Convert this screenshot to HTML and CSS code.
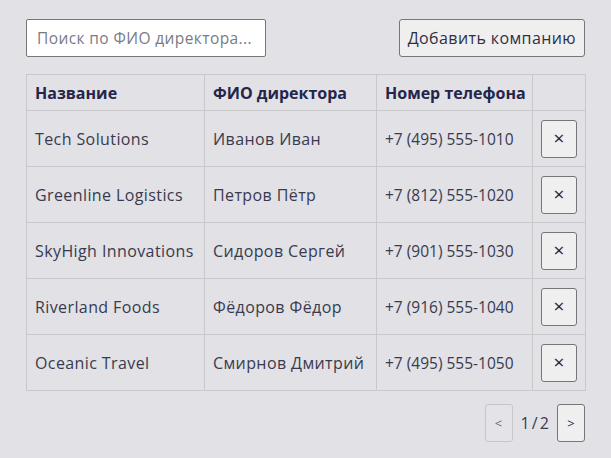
FILE: index.html
```html
<!DOCTYPE html>
<html lang="ru">
<head>
<meta charset="utf-8">
<link rel="stylesheet" href="styles.css">
</head>
<body>
<div class="page">
  <div class="toolbar">
    <input class="search" type="text" placeholder="Поиск по ФИО директора...">
    <button class="btn add">Добавить компанию</button>
  </div>
  <table class="companies">
    <colgroup>
      <col class="c-name"><col class="c-dir"><col class="c-phone"><col class="c-act">
    </colgroup>
    <thead>
      <tr><th>Название</th><th>ФИО директора</th><th>Номер телефона</th><th></th></tr>
    </thead>
    <tbody>
      <tr><td>Tech Solutions</td><td>Иванов Иван</td><td class="phone">+7 (495) 555-1010</td><td class="act"><button class="btn del">×</button></td></tr>
      <tr><td>Greenline Logistics</td><td>Петров Пётр</td><td class="phone">+7 (812) 555-1020</td><td class="act"><button class="btn del">×</button></td></tr>
      <tr><td>SkyHigh Innovations</td><td>Сидоров Сергей</td><td class="phone">+7 (901) 555-1030</td><td class="act"><button class="btn del">×</button></td></tr>
      <tr><td>Riverland Foods</td><td>Фёдоров Фёдор</td><td class="phone">+7 (916) 555-1040</td><td class="act"><button class="btn del">×</button></td></tr>
      <tr><td>Oceanic Travel</td><td>Смирнов Дмитрий</td><td class="phone">+7 (495) 555-1050</td><td class="act"><button class="btn del">×</button></td></tr>
    </tbody>
  </table>
  <div class="pager">
    <button class="btn page-btn" disabled>&lt;</button>
    <span class="page-info">1 / 2</span>
    <button class="btn page-btn">&gt;</button>
  </div>
</div>
</body>
</html>
```
FILE: styles.css
```css
html, body {
  margin: 0;
  padding: 0;
  background: #e1e1e6;
}
body {
  font-family: "Open Sans", "Noto Sans", sans-serif;
  color: #3a3a4e;
  font-size: 16px;
  letter-spacing: 0.4px;
}
.page {
  padding: 19px 26px;
}
.toolbar {
  display: flex;
  justify-content: space-between;
  align-items: center;
  margin-bottom: 17px;
}
.search {
  box-sizing: border-box;
  width: 240px;
  height: 38px;
  padding: 0 10px;
  border: 1px solid #767676;
  border-radius: 2px;
  background: #fff;
  font-family: inherit;
  font-size: 15.5px;
  letter-spacing: 0.4px;
  color: #333;
  text-overflow: ellipsis;
}
.search::placeholder {
  color: #7b7b84;
}
.btn {
  box-sizing: border-box;
  font-family: inherit;
  font-size: 16px;
  letter-spacing: 0.4px;
  color: #2f2f44;
  background: #efefef;
  border: 1px solid #767676;
  border-radius: 3px;
  cursor: pointer;
}
.add {
  height: 38px;
  padding: 0 8px;
}
.companies {
  width: 559px;
  border-collapse: collapse;
  table-layout: fixed;
}
.c-name { width: 178px; }
.c-dir { width: 172px; }
.c-phone { width: 156px; }
.c-act { width: 53px; }
.companies th, .companies td {
  border: 1px solid #c9c9cc;
  text-align: left;
  padding: 0 8px;
  white-space: nowrap;
}
.companies th {
  height: 35px;
  font-weight: 700;
  letter-spacing: 0;
  color: #25254a;
}
.companies td {
  height: 55px;
}
.companies td.phone {
  letter-spacing: 0;
  font-size: 15.5px;
}
.companies td.act {
  padding: 0 8px;
}
.del {
  width: 36px;
  height: 38px;
  font-size: 19px;
  font-weight: 400;
  line-height: 1;
  padding: 0;
  letter-spacing: 0;
  color: #23233a;
}
.pager {
  display: flex;
  justify-content: flex-end;
  align-items: center;
  margin-top: 13px;
  gap: 8px;
}
.page-btn {
  width: 28px;
  height: 38px;
  padding: 0;
  font-size: 13px;
  letter-spacing: 0;
}
.page-btn:disabled {
  background: #e4e4e8;
  border-color: #c6c6ca;
  color: #6d6d78;
  cursor: default;
}
.page-info {
  font-size: 16px;
  letter-spacing: 0;
  word-spacing: -2px;
  color: #3a3a55;
}
```
